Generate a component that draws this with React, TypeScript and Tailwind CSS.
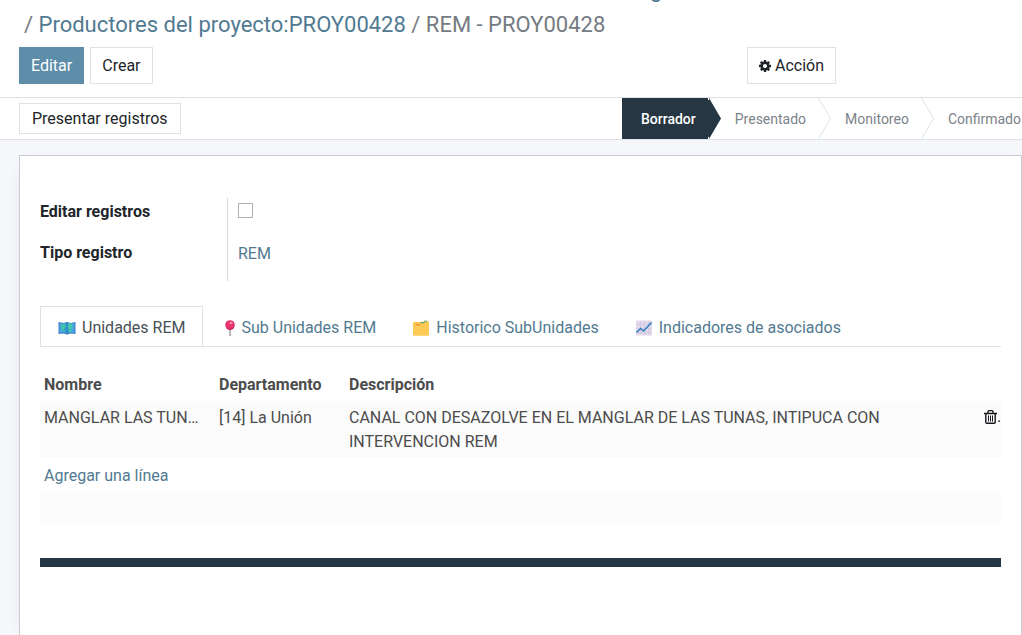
import React from "react";

function Chevron({ filled = false }: { filled?: boolean }) {
  return (
    <svg width="13" height="41" viewBox="0 0 13 41" className="shrink-0" aria-hidden="true">
      {filled ? (
        <path d="M0 2V39L1 39V41L13 20.500 1 0V2Z" fill="#263743" />
      ) : (
        <path d="M0.500 0L12.500 20.500 0.500 41" fill="none" stroke="#dee2e6" />
      )}
    </svg>
  );
}

function GearIcon() {
  return (
    <svg width="12" height="12" viewBox="0 0 1536 1536" fill="currentColor" aria-hidden="true">
      <path d="M1024 768q0-106-75-181t-181-75-181 75-75 181 75 181 181 75 181-75 75-181zm512-109v222q0 12-8 23t-20 13l-185 28q-19 54-39 91 35 50 107 138 10 12 10 25t-9 23q-27 37-99 108t-94 71q-12 0-26-9l-138-108q-44 23-91 38-16 136-29 186-7 28-36 28H657q-14 0-24.500-8.500T621 1506l-28-184q-49-16-90-37l-141 107q-10 9-25 9-14 0-25-11-126-114-165-168-7-10-7-23 0-12 8-23 15-21 51-66.500t54-70.500q-27-50-41-99L29 913q-13-2-21-12.500T0 877V655q0-12 8-23t19-13l186-28q14-46 39-92-40-57-107-138-10-12-10-24 0-10 9-23 26-36 98.500-107.500T337 135q13 0 26 10l138 107q44-23 91-38 16-136 29-186 7-28 36-28h222q14 0 24.500 8.500T915 30l28 184q49 16 90 37l142-107q9-9 24-9 13 0 25 10 129 119 165 170 7 8 7 22 0 12-8 23-15 21-51 66.500t-54 70.500q26 50 41 98l183 28q13 2 21 12.500t8 23.500z" />
    </svg>
  );
}

function MapIcon() {
  return (
    <svg width="18" height="16" viewBox="0 0 18 16" className="mr-1.5" aria-hidden="true">
      <path d="M0.500 2l5 1L9 2l3.500 1 5-1v12l-5-.5L9 14.500l-3.500-1-5 .5z" fill="#3f78cf" />
      <path d="M1.500 3l4 .8v8.700l-4 .5zM12.500 3.800l4-.8v10l-4-.5z" fill="#4aa3dd" />
      <path d="M5.500 3.500L9 2.500l3.500 1v9L9 13.500l-3.500-1z" fill="#35a0cc" />
      <path d="M3 4h4l1 3-2 1 1 4-3-2-1-3z" fill="#3fc4ad" />
      <path d="M10 4l4-.5 1 3-2 2 .5 3-2 1-1-4-1-2z" fill="#45c9ab" />
      <path d="M9 2.500v12" stroke="#2f6fc0" strokeWidth=".8" />
    </svg>
  );
}

function PinIcon() {
  return (
    <svg width="18" height="18" viewBox="0 0 18 18" className="mr-0.5" aria-hidden="true">
      <path d="M8.300 9h1.600v7.500l-.8 1-.8-1z" fill="#a9a3ac" />
      <circle cx="9" cy="6" r="4.800" fill="#e8336c" />
      <path d="M5 8.500a4.800 4.800 0 0 0 8.600-1.200 6 6 0 0 1-8.600 1.200z" fill="#c11d57" />
      <ellipse cx="10" cy="4" rx="1.600" ry="1.200" fill="#ff8fa8" />
    </svg>
  );
}

function FolderIcon() {
  return (
    <svg width="18" height="16" viewBox="0 0 18 16" className="mr-1.5" aria-hidden="true">
      <path d="M1 3q0-1 1-1h5l5-.5h4q1 0 1 1v12q0 1-1 1H2q-1 0-1-1z" fill="#fbc54e" />
      <path d="M12 1.200h3.500" stroke="#5eac5b" />
      <path d="M8.500 2.700h4" stroke="#3b9b8b" />
      <path d="M4 5h4" stroke="#e8603c" />
      <path d="M1 5.500h7l3-1.500 6-1v11.500q0 1-1 1H2q-1 0-1-1z" fill="#fdcb55" />
    </svg>
  );
}

function ChartIcon() {
  return (
    <svg width="18" height="16" viewBox="0 0 18 16" className="mr-1.5" aria-hidden="true">
      <rect x="1" y="0.500" width="16" height="15" rx="1" fill="#e2d8ea" />
      <path d="M5.500 1v14M9.500 1v14M13.500 1v14M1 4.500h16M1 8.500h16M1 12.500h16" stroke="#d0c4dd" strokeWidth=".7" />
      <path d="M1.500 12.500l4-4 3 2.500L16.500 2.500" fill="none" stroke="#2f80c2" strokeWidth="1.600" />
    </svg>
  );
}

function TrashIcon() {
  return (
    <svg width="13" height="14" viewBox="0 0 13 14" fill="none" stroke="#16181b" aria-hidden="true">
      <path d="M0 3.500h13M4 3V2q0-1.300 1.200-1.300h2.600Q9 .7 9 2v1" strokeWidth="1.300" />
      <path d="M1.800 3.500v8.800q0 1 1 1h7.400q1 0 1-1V3.500" strokeWidth="1.400" />
      <path d="M4.500 5.500v6M6.500 5.500v6M8.500 5.500v6" />
    </svg>
  );
}

const tabs = [
  { label: "Unidades REM", icon: <MapIcon /> },
  { label: "Sub Unidades REM", icon: <PinIcon /> },
  { label: "Historico SubUnidades", icon: <FolderIcon /> },
  { label: "Indicadores de asociados", icon: <ChartIcon /> },
];

export default function App() {
  return (
    <div className="flex min-h-screen flex-col overflow-hidden bg-[#f6f7fa] font-['Roboto',sans-serif] text-base leading-6 text-[#4c4c4c]">
      <header className="overflow-hidden border-b border-[#dee2e6] bg-white pb-[13px]">
        <nav aria-label="Ruta" className="-mt-7 pl-6 text-[22px] leading-[35px]">
          <div className="pl-[626px] text-[#517a91]">g</div>
          <div className="whitespace-nowrap text-[#757b82]">
            /{" "}
            <a href="#productores" className="text-[#517a91]">
              Productores del proyecto:PROY00428
            </a>{" "}
            / REM - PROY00428
          </div>
        </nav>
        <div className="mt-[5px] flex gap-1.5 pl-[19px] text-[#212529]">
          <button className="h-[37px] border border-[#5d8da8] bg-[#5d8da8] px-[11px] text-white">Editar</button>
          <button className="h-[37px] border border-[#dee2e6] bg-white px-[11px]">Crear</button>
          <button className="mr-[186px] ml-auto flex h-[37px] items-center gap-1 border border-[#dee2e6] px-[11px]">
            <GearIcon />
            Acción
          </button>
        </div>
      </header>

      <div className="flex items-center justify-between overflow-hidden border-b border-[#dee2e6] bg-white pl-[19px]">
        <button className="h-[31px] shrink-0 border border-[#dee2e6] px-3 text-[#212529]">Presentar registros</button>
        <ol className="flex h-[41px] items-center text-sm whitespace-nowrap text-[#7c838a]">
          <li className="flex items-center">
            <span className="flex h-[41px] items-center bg-[#263743] pr-3 pl-[19px] font-medium text-white">Borrador</span>
            <Chevron filled />
          </li>
          <li className="flex items-center">
            <span className="pr-3 pl-3.5">Presentado</span>
            <Chevron />
          </li>
          <li className="flex items-center">
            <span className="pr-3 pl-3.5">Monitoreo</span>
            <Chevron />
          </li>
          <li className="pr-px pl-3.5">Confirmado</li>
        </ol>
      </div>

      <main className="mt-[15px] ml-[19px] flex-1 border border-b-0 border-[#c9ccd2] bg-white px-5 pt-[42px] shadow-[0_5px_20px_-15px_rgba(0,0,0,0.5)]">
        <div className="grid w-[400px] grid-cols-[187px_1fr] text-[#212529]">
          <label htmlFor="editar" className="pt-0.5 pb-[15px] font-bold">
            Editar registros
          </label>
          <div className="border-l border-[#d5d8dc] pt-[5px] pl-2.5">
            <input id="editar" type="checkbox" className="block size-[15px] appearance-none border border-[#adb1b5] bg-white" />
          </div>
          <span className="pt-0.5 pb-4 font-bold">Tipo registro</span>
          <div className="border-l border-[#d5d8dc] pt-[3px] pl-2.5">
            <a href="#rem" className="text-[#517a91]">
              REM
            </a>
          </div>
        </div>

        <div role="tablist" className="mt-[25px] flex border-b border-[#dee2e6] whitespace-nowrap">
          {tabs.map((tab, i) => (
            <button
              key={tab.label}
              role="tab"
              aria-selected={i === 0}
              className={
                i === 0
                  ? "-mb-px flex h-[41px] items-center border border-[#dee2e6] bg-white px-[17px] pt-0.5 text-[#495057]"
                  : "flex h-10 items-center px-[18px] pt-[3px] text-[#517a91]"
              }
            >
              {tab.icon}
              {tab.label}
            </button>
          ))}
        </div>

        <table className="mt-6 w-full table-fixed text-left">
          <thead className="align-top">
            <tr className="h-[30px]">
              <th className="w-[175px] px-1 pt-0.5 font-bold">Nombre</th>
              <th className="w-[130px] px-1 pt-0.5 font-bold">Departamento</th>
              <th className="px-1 pt-0.5 font-bold">Descripción</th>
              <th className="w-6" aria-label="Acciones" />
            </tr>
          </thead>
          <tbody className="align-top">
            <tr className="bg-[#fbfbfb]">
              <td className="truncate pt-[5px] pr-3 pl-1">MANGLAR LAS TUNAS</td>
              <td className="px-1 pt-[5px]">[14] La Unión</td>
              <td className="pt-[5px] pr-16 pb-1 pl-1">
                CANAL CON DESAZOLVE EN EL MANGLAR DE LAS TUNAS, INTIPUCA CON INTERVENCION REM
              </td>
              <td className="pt-1 pl-[7px]">
                <div className="flex h-6 items-center text-[#16181b]">
                  <button aria-label="Eliminar">
                    <TrashIcon />
                  </button>
                  .
                </div>
              </td>
            </tr>
            <tr>
              <td colSpan={4} className="px-1 pt-1.5 pb-1">
                <a href="#agregar" className="text-[#517a91]">
                  Agregar una línea
                </a>
              </td>
            </tr>
            <tr className="h-[33px] bg-[#fbfbfb]">
              <td colSpan={4} />
            </tr>
          </tbody>
        </table>
        <div className="mt-[33px] h-[9px] bg-[#263743]" />
      </main>
    </div>
  );
}
